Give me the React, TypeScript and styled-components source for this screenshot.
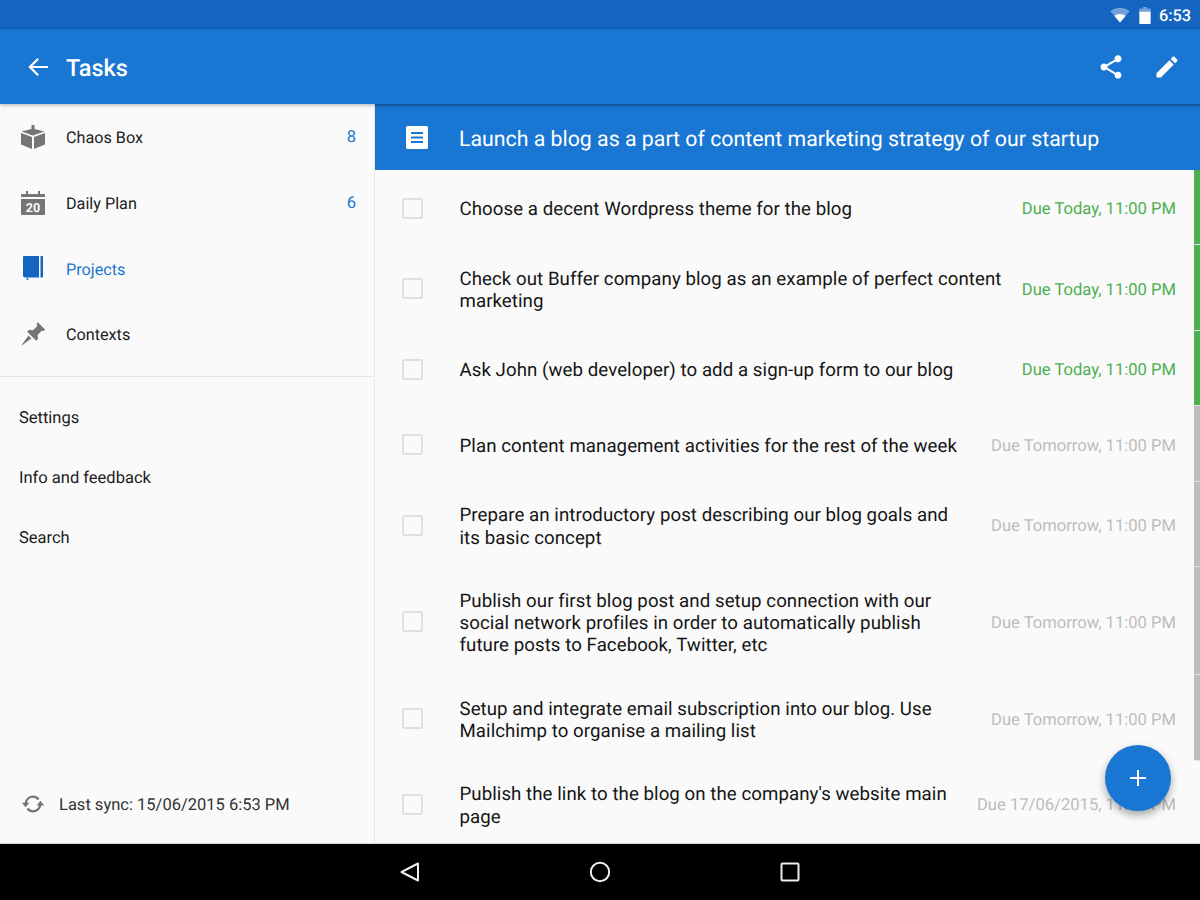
import React from "react";
import styled, { createGlobalStyle } from "styled-components";

const Global = createGlobalStyle`
  html, body { margin: 0; padding: 0; background: #fafafa; }
  body { font-family: Roboto, "Noto Sans", sans-serif; text-rendering: geometricPrecision; }
  #root { width: 1200px; height: 900px; overflow: hidden; }
`;

const Screen = styled.div`
  width: 1200px;
  height: 900px;
  display: flex;
  flex-direction: column;
  overflow: hidden;
  position: relative;
`;

const StatusBar = styled.div`
  height: 29px;
  flex: none;
  background: #1565c0;
  display: flex;
  align-items: center;
  justify-content: flex-end;
  padding: 1px 9px 0 0;
  box-sizing: border-box;
  color: #fff;
  font-size: 16.3px;
  font-weight: 500;
`;

const StatusIcon = styled.svg<{ $gap: number }>`
  display: block;
  margin-right: ${(p) => p.$gap}px;
`;

const AppBar = styled.header`
  height: 75px;
  flex: none;
  background: #1976d2;
  display: flex;
  align-items: center;
  color: #fff;
  padding: 0 19px 0 26px;
  box-sizing: border-box;
  position: relative;
  z-index: 2;
  box-shadow: 0 1px 4px rgba(0, 0, 0, 0.3);
`;

const BackIcon = styled.svg`
  display: block;
`;

const Title = styled.h1`
  flex: 1;
  margin: 0 0 0 16px;
  padding-top: 2px;
  font-size: 23.5px;
  font-weight: 500;
`;

const BarAction = styled.svg`
  display: block;
  margin-left: 28px;
`;

const Body = styled.div`
  flex: 1;
  min-height: 0;
  display: flex;
`;

const Sidebar = styled.nav`
  width: 375px;
  flex: none;
  box-sizing: border-box;
  border-right: 1px solid #e8e8e8;
  background: #fafafa;
  display: flex;
  flex-direction: column;
`;

const NavRow = styled.div<{ $active?: boolean }>`
  height: 65.7px;
  flex: none;
  display: flex;
  align-items: center;
  padding: 0 18px 0 21px;
  font-size: 16.2px;
  color: ${(p) => (p.$active ? "#1976d2" : "#1c1c1c")};
`;

const NavIcon = styled.svg`
  display: block;
  width: 24px;
  height: 24px;
  margin-right: 21px;
  flex: none;
`;

const NavLabel = styled.span`
  flex: 1;
  padding-top: 2px;
`;

const Count = styled.span`
  padding-top: 2px;
  font-size: 16.5px;
  color: #1976d2;
`;

const Divider = styled.div`
  height: 1px;
  flex: none;
  background: #e6e6e6;
  margin-top: 9.2px;
`;

const Links = styled.div`
  padding-top: 12px;
`;

const LinkRow = styled.div`
  height: 60px;
  display: flex;
  align-items: center;
  padding-left: 19px;
  font-size: 16.5px;
  color: #1c1c1c;
`;

const SyncRow = styled.div`
  margin-top: auto;
  height: 78px;
  flex: none;
  display: flex;
  align-items: center;
  padding: 0 0 0 21px;
  font-size: 16.5px;
  color: #333;
`;

const SyncLabel = styled.span`
  padding-top: 2px;
`;

const SyncIcon = styled.svg`
  display: block;
  margin-right: 14px;
`;

const Main = styled.main`
  flex: 1;
  min-width: 0;
  display: flex;
  flex-direction: column;
  background: #fafafa;
`;

const ProjectHeader = styled.div`
  height: 66px;
  flex: none;
  background: #1976d2;
  display: flex;
  align-items: center;
  padding-left: 31px;
  color: #fff;
  font-size: 21.3px;
  box-shadow: inset 0 4px 4px -3px rgba(0, 0, 0, 0.22);
`;

const HeaderTitle = styled.span`
  padding-top: 5px;
`;

const HeaderIcon = styled.svg`
  display: block;
  margin-right: 31px;
`;

const TaskList = styled.div`
  flex: 1;
  min-height: 0;
  overflow: hidden;
`;

const Row = styled.div<{ $h: number; $edge: string }>`
  height: ${(p) => p.$h}px;
  box-sizing: border-box;
  display: flex;
  align-items: center;
  padding: 1px 18px 0 27px;
  border-right: 6px solid ${(p) => p.$edge};
  position: relative;
  &::after {
    content: "";
    position: absolute;
    right: -6px;
    bottom: 0;
    width: 6px;
    height: 1px;
    background: #e4e4e4;
  }
`;

const Check = styled.span`
  width: 17px;
  height: 17px;
  flex: none;
  border: 2px solid #e0e0e0;
  border-radius: 2px;
  margin-right: 37px;
`;

const TaskText = styled.div`
  flex: 1;
  min-width: 0;
  padding-top: 3px;
  margin-left: -0.5px;
  font-size: 18.67px;
  line-height: 22.3px;
  letter-spacing: 0.06px;
  color: #151515;
`;

const Due = styled.div<{ $tone: "green" | "grey" }>`
  flex: none;
  margin-left: 16px;
  padding-top: 3px;
  font-size: 16.6px;
  color: ${(p) => (p.$tone === "green" ? "#4caf50" : "#bdbdbd")};
`;

const Fab = styled.button`
  position: absolute;
  left: 1105px;
  top: 745px;
  width: 66px;
  height: 66px;
  border-radius: 50%;
  border: 0;
  padding: 0;
  background: #1976d2;
  box-shadow: 0 4px 9px rgba(0, 0, 0, 0.35);
  display: flex;
  align-items: center;
  justify-content: center;
  z-index: 3;
`;

const NavBar = styled.footer`
  height: 57px;
  flex: none;
  background: #000;
  border-top: 1px solid #d8d8d8;
  box-sizing: border-box;
  display: flex;
  align-items: center;
  justify-content: center;
  gap: 168px;
  position: relative;
  z-index: 4;
`;

const tasks: { t: React.ReactNode; due: string; tone: "green" | "grey"; h: number }[] = [
  { t: "Choose a decent Wordpress theme for the blog", due: "Due Today, 11:00 PM", tone: "green", h: 75 },
  { t: <>Check out Buffer company blog as an example of perfect content<br />marketing</>, due: "Due Today, 11:00 PM", tone: "green", h: 86 },
  { t: "Ask John (web developer) to add a sign-up form to our blog", due: "Due Today, 11:00 PM", tone: "green", h: 75 },
  { t: "Plan content management activities for the rest of the week", due: "Due Tomorrow, 11:00 PM", tone: "grey", h: 76 },
  { t: <>Prepare an introductory post describing our blog goals and<br />its basic concept</>, due: "Due Tomorrow, 11:00 PM", tone: "grey", h: 85 },
  { t: <>Publish our first blog post and setup connection with our<br />social network profiles in order to automatically publish<br />future posts to Facebook, Twitter, etc</>, due: "Due Tomorrow, 11:00 PM", tone: "grey", h: 108 },
  { t: <>Setup and integrate email subscription into our blog. Use<br />Mailchimp to organise a mailing list</>, due: "Due Tomorrow, 11:00 PM", tone: "grey", h: 86 },
  { t: <>Publish the link to the blog on the company's website main<br />page</>, due: "Due 17/06/2015, 11:00 PM", tone: "grey", h: 85 },
];

export default function App() {
  return (
    <Screen>
      <Global />
      <StatusBar>
        <StatusIcon $gap={9} width="20" height="16" viewBox="0 0 20 16">
          <path d="M10 15.5 0.3 4.2C3 2 6.4.8 10 .8s7 1.2 9.7 3.4z" fill="#fff" fillOpacity="0.4" />
          <path d="M10 15.5 4.5 9C6 7.8 7.9 7.1 10 7.1s4 .7 5.5 1.9z" fill="#fff" />
        </StatusIcon>
        <StatusIcon $gap={8} width="12" height="17" viewBox="0 0 12 18">
          <path d="M4 0h4v1.5h3a1 1 0 0 1 1 1V6H0V2.5a1 1 0 0 1 1-1h3z" fill="#fff" fillOpacity="0.4" />
          <path d="M0 5h12v12a1 1 0 0 1-1 1H1a1 1 0 0 1-1-1z" fill="#fff" />
        </StatusIcon>
        <span>6:53</span>
      </StatusBar>
      <AppBar>
        <BackIcon width="24" height="24" viewBox="0 0 24 24">
          <path d="M22 11H6.5l6.4-6.4L11.3 3 2.3 12l9 9 1.6-1.6L6.5 13H22z" fill="#fff" />
        </BackIcon>
        <Title>Tasks</Title>
        <BarAction width="28" height="28" viewBox="0 0 24 24">
          <path d="M18 16.08c-.76 0-1.44.3-1.96.77L8.91 12.7c.05-.23.09-.46.09-.7s-.04-.47-.09-.7l7.05-4.11c.54.5 1.25.81 2.04.81 1.66 0 3-1.34 3-3s-1.34-3-3-3-3 1.34-3 3c0 .24.04.47.09.7L8.04 9.81C7.5 9.31 6.79 9 6 9c-1.66 0-3 1.34-3 3s1.34 3 3 3c.79 0 1.5-.31 2.04-.81l7.12 4.16c-.05.21-.08.43-.08.65 0 1.61 1.31 2.92 2.92 2.92s2.92-1.31 2.92-2.92-1.31-2.92-2.92-2.92z" fill="#fff" />
        </BarAction>
        <BarAction width="28" height="28" viewBox="0 0 24 24">
          <path d="M3 17.25V21h3.75L17.81 9.94l-3.75-3.75L3 17.25zM20.71 7.04c.39-.39.39-1.02 0-1.41l-2.34-2.34c-.39-.39-1.02-.39-1.41 0l-1.83 1.83 3.75 3.75 1.83-1.83z" fill="#fff" />
        </BarAction>
      </AppBar>
      <Body>
        <Sidebar>
          <NavRow>
            <NavIcon viewBox="1 1 24 24">
              <path d="M11.5 1h3v4l10 2.5L13 11.5 1.5 7.5l10-2.5z" fill="#757575" />
              <path d="M1 9l11 4v12L1 20.5zM25 9l-11 4v12l11-4.5z" fill="#757575" />
            </NavIcon>
            <NavLabel>Chaos Box</NavLabel>
            <Count>8</Count>
          </NavRow>
          <NavRow>
            <NavIcon viewBox="1 1 24 24">
              <path d="M6 1h2v3h10V1h2v3h4a1 1 0 0 1 1 1v2H1V5a1 1 0 0 1 1-1h4z" fill="#757575" />
              <path d="M1 9h24v15a1 1 0 0 1-1 1H2a1 1 0 0 1-1-1z" fill="#757575" />
              <text x="13" y="22" textAnchor="middle" fontSize="12.5" fontWeight="700" fontFamily="Roboto, sans-serif" fill="#fafafa">20</text>
            </NavIcon>
            <NavLabel>Daily Plan</NavLabel>
            <Count>6</Count>
          </NavRow>
          <NavRow $active>
            <NavIcon viewBox="1 1 24 24">
              <path d="M4 1h15v21.5H5a2 2 0 0 1-2-2V2a1 1 0 0 1 1-1z" fill="#1565c0" />
              <path d="M20.5 1H22a1 1 0 0 1 1 1v19.500a1 1 0 0 1-1 1h-1.500z" fill="#1565c0" />
              <circle cx="7.5" cy="24" r="1" fill="#1565c0" />
            </NavIcon>
            <NavLabel>Projects</NavLabel>
          </NavRow>
          <NavRow>
            <NavIcon viewBox="1 1 24 24">
              <path d="M17.5 1l7.500 7.500-1.700 1.700-1.300-.6-4.400 4.400.5 3.800-1.900 1.900-9-9 1.900-1.900 3.800.5 4.400-4.400-.6-1.300z" fill="#757575" />
              <path d="M8.5 14.500l3 3L1 25z" fill="#757575" />
            </NavIcon>
            <NavLabel>Contexts</NavLabel>
          </NavRow>
          <Divider />
          <Links>
            <LinkRow>Settings</LinkRow>
            <LinkRow>Info and feedback</LinkRow>
            <LinkRow>Search</LinkRow>
          </Links>
          <SyncRow>
            <SyncIcon width="24" height="22" viewBox="0 0 26 24" fill="none">
              <path d="M5 11.500C5.500 7 9 4 13 4c2.500 0 4.500 1 6 3" stroke="#757575" strokeWidth="2.600" />
              <path d="M21 12.500C20.500 17 17 20 13 20c-2.500 0-4.500-1-6-3" stroke="#757575" strokeWidth="2.600" />
              <path d="M.8 10.500h8.200l-4.100 5zM25.200 13.500H17l4.100-5z" fill="#757575" />
            </SyncIcon>
            <SyncLabel>Last sync: 15/06/2015 6:53 PM</SyncLabel>
          </SyncRow>
        </Sidebar>
        <Main>
          <ProjectHeader>
            <HeaderIcon width="22" height="23" viewBox="0 0 22 23">
              <path d="M1.500 0h19A1.500 1.500 0 0 1 22 1.500v20a1.500 1.500 0 0 1-1.500 1.500h-19A1.500 1.500 0 0 1 0 21.500v-20A1.500 1.500 0 0 1 1.500 0z" fill="#fff" />
              <path d="M5 6h12v2H5zM5 10.500h12v2H5zM5 15h12v2H5z" fill="#1976d2" />
            </HeaderIcon>
            <HeaderTitle>Launch a blog as a part of content marketing strategy of our startup</HeaderTitle>
          </ProjectHeader>
          <TaskList>
            {tasks.map((task, i) => (
              <Row key={i} $h={task.h} $edge={task.tone === "green" ? "#4caf50" : i === 7 ? "transparent" : "#bdbdbd"}>
                <Check />
                <TaskText>{task.t}</TaskText>
                <Due $tone={task.tone}>{task.due}</Due>
              </Row>
            ))}
          </TaskList>
        </Main>
      </Body>
      <Fab aria-label="Add">
        <svg width="16" height="16" viewBox="0 0 16 16">
          <path d="M7 0h2v7h7v2H9v7H7V9H0V7h7z" fill="#fff" />
        </svg>
      </Fab>
      <NavBar>
        <svg width="22" height="22" viewBox="0 0 22 22" fill="none">
          <path d="M19 2.500v17L2.500 11z" stroke="#eee" strokeWidth="2" strokeLinejoin="round" />
        </svg>
        <svg width="22" height="22" viewBox="0 0 22 22" fill="none">
          <circle cx="11" cy="11" r="9.200" stroke="#eee" strokeWidth="2" />
        </svg>
        <svg width="22" height="22" viewBox="0 0 22 22" fill="none">
          <rect x="2.500" y="2.500" width="17" height="17" rx="1" stroke="#eee" strokeWidth="2" />
        </svg>
      </NavBar>
    </Screen>
  );
}
